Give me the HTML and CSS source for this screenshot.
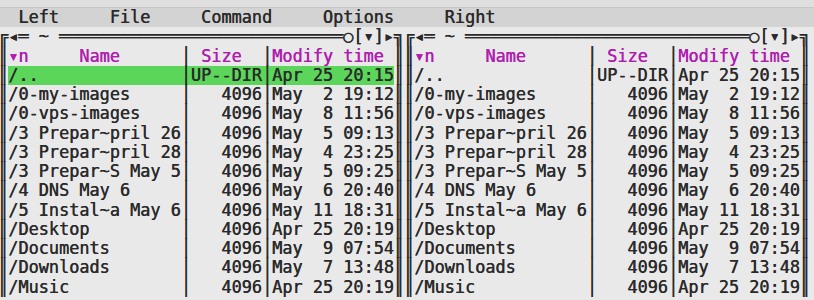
FILE: index.html
```html
<!DOCTYPE html>
<html lang="en">
<head>
    <meta charset="UTF-8">
    <meta name="viewport" content="width=device-width, initial-scale=1.0">
    <title>mc</title>
    <link rel="stylesheet" href="styles.css">
</head>
<body>
    <div class="titlebar"></div>
    <div class="term">
        <div class="line menubar">  Left     File     Command     Options     Right</div>
        <div class="line">╔◂═ ~ ════════════════════════════○[▾]▸╗╔◂═ ~ ════════════════════════════○[▾]▸╗</div>
        <div class="line">║<span class="hd">▾n</span>     <span class="hd">Name</span>      │ <span class="hd">Size</span>  │<span class="hd">Modify time</span> ║║<span class="hd">▾n</span>     <span class="hd">Name</span>      │ <span class="hd">Size</span>  │<span class="hd">Modify time</span> ║</div>
        <div class="line">║<span class="sel">/..              │UP--DIR│Apr 25 20:15</span>║║/..              │UP--DIR│Apr 25 20:15║</div>
        <div class="line">║/0-my-images     │   4096│May  2 19:12║║/0-my-images     │   4096│May  2 19:12║</div>
        <div class="line">║/0-vps-images    │   4096│May  8 11:56║║/0-vps-images    │   4096│May  8 11:56║</div>
        <div class="line">║/3 Prepar~pril 26│   4096│May  5 09:13║║/3 Prepar~pril 26│   4096│May  5 09:13║</div>
        <div class="line">║/3 Prepar~pril 28│   4096│May  4 23:25║║/3 Prepar~pril 28│   4096│May  4 23:25║</div>
        <div class="line">║/3 Prepar~S May 5│   4096│May  5 09:25║║/3 Prepar~S May 5│   4096│May  5 09:25║</div>
        <div class="line">║/4 DNS May 6     │   4096│May  6 20:40║║/4 DNS May 6     │   4096│May  6 20:40║</div>
        <div class="line">║/5 Instal~a May 6│   4096│May 11 18:31║║/5 Instal~a May 6│   4096│May 11 18:31║</div>
        <div class="line">║/Desktop         │   4096│Apr 25 20:19║║/Desktop         │   4096│Apr 25 20:19║</div>
        <div class="line">║/Documents       │   4096│May  9 07:54║║/Documents       │   4096│May  9 07:54║</div>
        <div class="line">║/Downloads       │   4096│May  7 13:48║║/Downloads       │   4096│May  7 13:48║</div>
        <div class="line">║/Music           │   4096│Apr 25 20:19║║/Music           │   4096│Apr 25 20:19║</div>
    </div>
</body>
</html>
```

FILE: styles.css
```css
body {
    margin: 0;
    background-color: #e9e9e9;
    overflow: hidden;
}
.titlebar {
    height: 8px;
    background-color: #dfdfdf;
    border-bottom: 1px solid #c6c6c6;
    box-sizing: border-box;
}
.term {
    margin-left: -2px;
    font-family: "DejaVu Sans Mono", monospace;
    font-size: 16.86px;
    line-height: 19.27px;
    color: #2a2a2a;
    text-shadow: 0.35px 0 0 currentColor;
}
.line {
    height: 19.27px;
    white-space: pre;
}
.menubar {
    background-color: #d3d3d3;
    margin-left: 2px;
    text-indent: -2px;
}
.hd {
    color: #b01cb0;
}
.sel {
    display: inline-block;
    height: 19.27px;
    background-color: #5bd65b;
    vertical-align: top;
}
```
